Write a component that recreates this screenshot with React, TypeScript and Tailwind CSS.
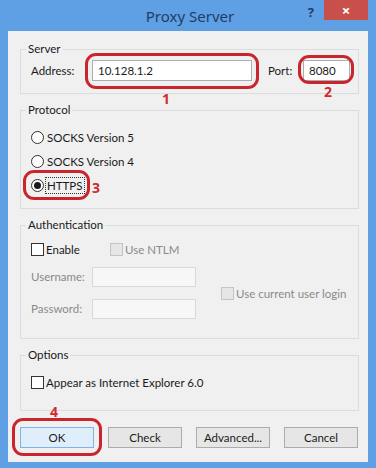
import type { ReactNode } from 'react';

function GroupBox({ label, className, children }: { label: string; className: string; children: ReactNode }) {
  return (
    <div className={`relative border border-[#dcdcdc] ${className}`}>
      <span className="absolute -top-[9px] left-[5px] bg-[#f0f0f0] px-[2px] leading-[16px] text-[#1a1a1a]">{label}</span>
      {children}
    </div>
  );
}

function Radio({ label, checked }: { label: string; checked?: boolean }) {
  return (
    <div className="flex h-[24px] items-center">
      <span className="flex h-[13px] w-[13px] items-center justify-center rounded-full border border-[#333] bg-white">
        {checked ? <span className="h-[7px] w-[7px] rounded-full bg-[#1a1a1a]" /> : null}
      </span>
      <span
        className={`ml-[2px] px-[1px] leading-[15px] text-[#1a1a1a] ${checked ? 'outline outline-1 outline-dotted outline-[#333]' : ''}`}
      >
        {label}
      </span>
    </div>
  );
}

function CheckBox({ label, disabled }: { label: string; disabled?: boolean }) {
  return (
    <div className="flex h-[20px] items-center whitespace-nowrap">
      <span
        className={`h-[13px] w-[13px] border ${disabled ? 'border-[#c4c4c4] bg-[#e6e6e6]' : 'border-[#333] bg-white'}`}
      />
      <span className={`ml-[2px] leading-[15px] ${disabled ? 'text-[#8a8a8a]' : 'text-[#1a1a1a]'}`}>{label}</span>
    </div>
  );
}

function Button({ label, primary }: { label: string; primary?: boolean }) {
  return (
    <button
      type="button"
      className={`h-[21px] w-[74px] border text-[11.5px] leading-[19px] text-[#1a1a1a] ${
        primary ? 'border-[#7eb4ea] bg-[#e0eefc]' : 'border-[#acacac] bg-[#e6e6e6]'
      }`}
    >
      {label}
    </button>
  );
}

function Mark({ className }: { className: string }) {
  return <div className={`pointer-events-none absolute rounded-[11px] border-[3px] border-[#c8252c] ${className}`} />;
}

function Num({ n, className }: { n: string; className: string }) {
  return (
    <span className={`absolute font-['Noto_Sans',sans-serif] text-[14px] leading-[14px] font-bold text-[#d22a30] ${className}`}>
      {n}
    </span>
  );
}

export default function App() {
  return (
    <div className="flex h-[468px] w-[376px] flex-col bg-[#5f9fe3] font-['Lato',sans-serif] text-[11.5px]">
      <div className="grid h-[31px] grid-cols-[1fr_auto_1fr] font-['Noto_Sans',sans-serif]">
        <div />
        <div className="self-center pt-[1px] pl-[4px] text-[15px] text-[#1f3d68]">Proxy Server</div>
        <div className="flex items-start justify-end pr-[8px]">
          <span className="mt-[5px] mr-[10px] text-[13px] leading-[14px] font-bold text-[#1f3d68]">?</span>
          <span className="flex h-[20px] w-[44px] items-center justify-center bg-[#c9504a] text-[15px] leading-[14px] font-bold text-white">
            ×
          </span>
        </div>
      </div>

      <div className="relative mx-[8px] mb-[6px] flex flex-1 flex-col gap-[16px] bg-[#f0f0f0] pt-[18px] pr-[9px] pb-[14px] pl-[12px]">
        <GroupBox label="Server" className="h-[45px]">
          <div className="flex items-center pt-[10px] pl-[10px]">
            <span className="w-[61px] text-[#1a1a1a]">Address:</span>
            <div className="flex h-[21px] w-[160px] items-center border border-[#abadb3] bg-white pl-[5px] text-[#1a1a1a]">
              10.128.1.2
            </div>
            <span className="ml-[16px] w-[35px] text-[#1a1a1a]">Port:</span>
            <div className="flex h-[21px] w-[47px] items-center border border-[#abadb3] bg-white pl-[5px] text-[#1a1a1a]">
              8080
            </div>
          </div>
        </GroupBox>

        <GroupBox label="Protocol" className="h-[99px]">
          <div className="flex flex-col pt-[14px] pl-[10px]">
            <Radio label="SOCKS Version 5" />
            <Radio label="SOCKS Version 4" />
            <Radio label="HTTPS" checked />
          </div>
        </GroupBox>

        <GroupBox label="Authentication" className="h-[114px]">
          <div className="flex flex-col pt-[13px] pl-[10px]">
            <div className="flex">
              <div className="w-[79px]">
                <CheckBox label="Enable" />
              </div>
              <CheckBox label="Use NTLM" disabled />
            </div>
            <div className="mt-[8px] flex items-center">
              <div className="flex flex-col gap-[12px]">
                <div className="flex items-center">
                  <span className="w-[61px] text-[#8a8a8a]">Username:</span>
                  <div className="h-[20px] w-[104px] border border-[#d9d9d9] bg-[#f7f7f7]" />
                </div>
                <div className="flex items-center">
                  <span className="w-[61px] text-[#8a8a8a]">Password:</span>
                  <div className="h-[20px] w-[104px] border border-[#d9d9d9] bg-[#f7f7f7]" />
                </div>
              </div>
              <div className="ml-[25px]">
                <CheckBox label="Use current user login" disabled />
              </div>
            </div>
          </div>
        </GroupBox>

        <GroupBox label="Options" className="h-[56px]">
          <div className="pt-[16px] pl-[10px]">
            <CheckBox label="Appear as Internet Explorer 6.0" />
          </div>
        </GroupBox>

        <div className="flex justify-between pr-[1px]">
          <Button label="OK" primary />
          <Button label="Check" />
          <Button label="Advanced..." />
          <Button label="Cancel" />
        </div>

        <Mark className="top-[22px] left-[77px] h-[36px] w-[174px]" />
        <Mark className="top-[24px] left-[290px] h-[29px] w-[56px] rounded-[8px]" />
        <Num n="1" className="top-[61px] left-[154px]" />
        <Num n="2" className="top-[54px] left-[316px]" />
        <Mark className="top-[139px] left-[15px] h-[30px] w-[67px] rounded-[8px]" />
        <Num n="3" className="top-[150px] left-[84px]" />
        <Mark className="top-[387px] left-[4px] h-[38px] w-[90px]" />
        <Num n="4" className="top-[374px] left-[42px]" />
      </div>
    </div>
  );
}
